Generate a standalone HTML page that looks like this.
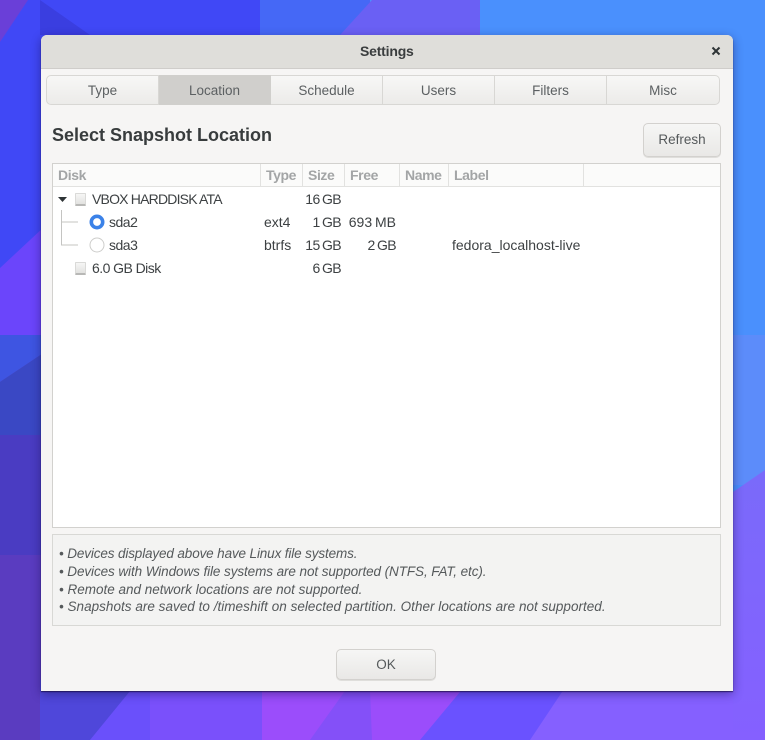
<!DOCTYPE html>
<html><head><meta charset="utf-8"><title>Settings</title>
<style>
html,body{margin:0;padding:0;width:765px;height:740px;overflow:hidden;background:#5a50f0}
body{position:relative;font-family:"Liberation Sans",sans-serif;font-size:14px;color:#2e3436}
#bg{position:absolute;left:0;top:0}
.win{position:absolute;left:41px;top:35px;width:692px;height:656px;background:#f6f5f4;border-radius:6px 6px 0 0;box-shadow:0 1px 1px rgba(20,10,60,.7),0 3px 10px rgba(20,10,70,.45)}
.hd{position:absolute;left:0;top:0;width:692px;height:33px;background:#dfdeda;border-radius:6px 6px 0 0;border-bottom:1px solid #cfcdca}
.t{position:absolute;white-space:nowrap;line-height:18px;filter:blur(.25px)}
.ab{position:absolute;box-sizing:border-box}
.tab{position:absolute;top:75px;height:30px;box-sizing:border-box;background:linear-gradient(#f7f7f6,#ecebe9);border:1px solid #d8d7d4;border-left:0;text-align:center;line-height:29px;color:#5c6062;font-size:13.5px}
.btn{position:absolute;box-sizing:border-box;background:linear-gradient(#f6f6f5,#e9e8e6);border:1px solid #d3d1ce;border-radius:5px;text-align:center;color:#55595b;box-shadow:0 1px 0 #dfdedb;font-size:13.5px}
.h{position:absolute;top:167px;color:#a3a5a6;font-weight:bold;font-size:14px;letter-spacing:-.4px;line-height:16px;white-space:nowrap;filter:blur(.25px)}
.sep{position:absolute;top:164px;width:1px;height:23px;background:#e2e2e0}
.c{position:absolute;white-space:nowrap;line-height:18px;font-size:14px;color:#3d4143;filter:blur(.25px)}
.r{text-align:right}
.g{letter-spacing:-.6px;word-spacing:-1px}
.n{position:absolute;left:59px;font-style:italic;font-size:13.5px;line-height:18px;color:#55595b;white-space:nowrap;filter:blur(.25px)}
.disk{position:absolute;width:11px;height:13px;background:linear-gradient(#f6f6f5,#e2e2e0);border:1px solid #dadad8;box-sizing:border-box;border-bottom:2px solid #b8b8b6;border-radius:1px}
</style></head><body>
<svg id="bg" width="765" height="740" viewBox="0 0 765 740">
<defs><linearGradient id="rg" x1="0" y1="0" x2="0" y2="1"><stop offset="0" stop-color="#7a6afa"/><stop offset="1" stop-color="#8560ff"/></linearGradient></defs>
<rect width="765" height="740" fill="#4a90fd"/>
<rect x="0" y="0" width="260" height="335" fill="#4048f6"/>
<polygon points="0,0 28,0 0,42" fill="#6a3fd8"/>
<polygon points="40,0 90,35 40,35" fill="#3a3ee0"/>
<rect x="260" y="0" width="110" height="35" fill="#4568f6"/>
<polygon points="340,35 372,0 480,0 480,35" fill="#6a60f4"/>
<polygon points="0,268 45,226 45,335 0,335" fill="#6b45fb"/>
<rect x="0" y="335" width="45" height="405" fill="#5a3cc0"/>
<polygon points="0,335 45,335 45,352 0,382" fill="#3e55e2"/>
<polygon points="0,382 45,352 45,435 0,435" fill="#3a48c4"/>
<rect x="0" y="435" width="45" height="120" fill="#4a3cc2"/>
<rect x="40" y="680" width="90" height="60" fill="#4f47da"/>
<polygon points="130,691 152,691 152,740 90,740" fill="#6a50fb"/>
<rect x="150" y="680" width="112" height="60" fill="#7a50fb"/>
<rect x="262" y="680" width="210" height="60" fill="#9b4dfb"/>
<polygon points="345,691 370,691 372,740 310,740" fill="#8450f8"/>
<polygon points="470,680 765,680 765,740 420,740" fill="#6a52ff"/>
<polygon points="570,680 765,680 765,740 530,740" fill="#8560ff"/>
<rect x="733" y="335" width="32" height="150" fill="#5c8cfa"/>
<polygon points="733,492 765,470 765,740 733,740" fill="url(#rg)"/>
</svg>

<div class="win"><div class="hd"></div></div>
<div class="t" style="left:360px;top:42px;font-weight:bold;font-size:14px;letter-spacing:-.2px;color:#3a3d3e">Settings</div>
<svg class="ab" style="left:711px;top:46px" width="10" height="10" viewBox="0 0 10 10"><path d="M1.5 1.5L8.5 8.5M8.5 1.5L1.5 8.5" stroke="#2e3436" stroke-width="2"/></svg>

<div class="tab" style="left:46px;width:113px;border-left:1px solid #d8d7d4;border-radius:5px 0 0 5px">Type</div>
<div class="tab" style="left:159px;width:112px;background:#d0cfcc;border-color:#d0cfcc">Location</div>
<div class="tab" style="left:271px;width:112px">Schedule</div>
<div class="tab" style="left:383px;width:112px">Users</div>
<div class="tab" style="left:495px;width:112px">Filters</div>
<div class="tab" style="left:607px;width:113px;border-radius:0 5px 5px 0">Misc</div>

<div class="t" style="left:52px;top:124px;font-size:18px;line-height:22px;font-weight:bold;color:#383c3d">Select Snapshot Location</div>
<div class="btn" style="left:643px;top:123px;width:78px;height:34px;line-height:32px">Refresh</div>

<div class="ab" style="left:52px;top:163px;width:669px;height:365px;background:#fff;border:1px solid #d2d1ce"></div>
<div class="ab" style="left:53px;top:164px;width:667px;height:23px;background:#fbfbfa;border-bottom:1px solid #e2e2e0"></div>
<div class="sep" style="left:260px"></div><div class="sep" style="left:302px"></div><div class="sep" style="left:344px"></div><div class="sep" style="left:399px"></div><div class="sep" style="left:448px"></div><div class="sep" style="left:583px"></div>
<div class="h" style="left:58px">Disk</div>
<div class="h" style="left:266px">Type</div>
<div class="h" style="left:308px">Size</div>
<div class="h" style="left:350px">Free</div>
<div class="h" style="left:405px">Name</div>
<div class="h" style="left:454px">Label</div>

<svg class="ab" style="left:56px;top:192px" width="50" height="85" viewBox="0 0 50 85">
<path d="M2 5H11L6.5 10Z" fill="#2e3436"/>
<path d="M5.5 18V53H22M5.5 30H22" fill="none" stroke="#c4c4c2" stroke-width="1"/>
</svg>
<div class="disk" style="left:75px;top:193px"></div>
<div class="disk" style="left:75px;top:262px"></div>
<svg class="ab" style="left:88px;top:213px" width="18" height="42" viewBox="0 0 18 42">
<circle cx="9" cy="9" r="5.7" fill="#fff" stroke="#3b82e8" stroke-width="3.6"/>
<circle cx="9" cy="32" r="7" fill="#fff" stroke="#cdcdcb" stroke-width="1"/>
</svg>

<div class="c" style="left:92px;top:190px;letter-spacing:-.8px">VBOX HARDDISK ATA</div>
<div class="c" style="left:109px;top:213px;letter-spacing:-.5px">sda2</div>
<div class="c" style="left:109px;top:236px;letter-spacing:-.5px">sda3</div>
<div class="c" style="left:92px;top:259px;letter-spacing:-.55px">6.0 GB Disk</div>
<div class="c" style="left:264px;top:213px">ext4</div>
<div class="c" style="left:264px;top:236px">btrfs</div>
<div class="c r g" style="right:424px;top:190px">16 GB</div>
<div class="c r g" style="right:424px;top:213px">1 GB</div>
<div class="c r g" style="right:424px;top:236px">15 GB</div>
<div class="c r g" style="right:424px;top:259px">6 GB</div>
<div class="c r" style="right:369px;top:213px;word-spacing:-1px">693 MB</div>
<div class="c r g" style="right:369px;top:236px">2 GB</div>
<div class="c" style="left:452px;top:236px">fedora_localhost-live</div>

<div class="ab" style="left:52px;top:534px;width:669px;height:92px;background:#f3f3f2;border:1px solid #d8d8d5"></div>
<div class="n" style="top:545px;letter-spacing:-.13px">• Devices displayed above have Linux file systems.</div>
<div class="n" style="top:563px;letter-spacing:-.085px">• Devices with Windows file systems are not supported (NTFS, FAT, etc).</div>
<div class="n" style="top:581px">• Remote and network locations are not supported.</div>
<div class="n" style="top:598px;letter-spacing:.025px">• Snapshots are saved to /timeshift on selected partition. Other locations are not supported.</div>

<div class="btn" style="left:336px;top:649px;width:100px;height:31px;line-height:29px">OK</div>
</body></html>
